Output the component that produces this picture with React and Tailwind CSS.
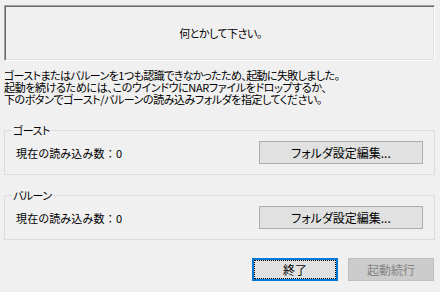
import React from "react";

function Group({ title, className }) {
  return (
    <div className={"relative ml-[4px] w-[431px] h-[45px] border border-[#dcdcdc] flex items-center justify-between pl-[11px] pr-[11px] " + (className || "")}>
      <span className="absolute left-[7px] top-[-8px] bg-[#f0f0f0] px-[1px] leading-[14px] text-[11px] tracking-[-0.5px]">{title}</span>
      <span className="leading-[14px] pt-[1px] text-[11px] tracking-[0.2px]">
        現在の読み込み数<span className="[font-feature-settings:normal]">：</span>0
      </span>
      <div className="w-[164px] h-[23px] border border-[#adadad] bg-[#e1e1e1] flex items-center justify-center leading-[14px]">
        フォルダ設定編集...
      </div>
    </div>
  );
}

export default function App() {
  return (
    <div className="w-[440px] h-[292px] bg-[#f0f0f0] text-black text-[12px] overflow-hidden [font-family:'Noto_Sans_CJK_JP',sans-serif] [font-feature-settings:'palt']">
      <div className="pt-[5px]">
        <div className="ml-[4px] w-[431px] h-[56px] border border-t-[#a0a0a0] border-l-[#a0a0a0] border-r-white border-b-white shadow-[inset_1px_1px_0_#696969,inset_-1px_-1px_0_#e3e3e3] flex items-center justify-center">
          <span className="leading-[14px] text-[11px] tracking-[-0.5px] pl-[2px]">何とかして下さい。</span>
        </div>
      </div>
      <div className="mt-[8px] ml-[4px] leading-[12px] text-[11px]">
        <div className="tracking-[-0.6px] whitespace-nowrap">ゴーストまたはバルーンを1つも認識できなかったため、起動に失敗しました。</div>
        <div className="tracking-[-0.35px] whitespace-nowrap">起動を続けるためには、このウインドウにNARファイルをドロップするか、</div>
        <div className="tracking-[-0.45px] whitespace-nowrap">下のボタンでゴースト/バルーンの読み込みフォルダを指定してください。</div>
      </div>
      <Group title="ゴースト" className="mt-[25px]" />
      <Group title="バルーン" className="mt-[20px]" />
      <div className="mt-[18px] flex justify-end gap-[10px] pr-[6px]">
        <div className="w-[86px] h-[23px] border-2 border-[#0078d7] bg-[#e1e1e1] flex">
          <div className="flex-1 border border-dotted border-black flex items-center justify-center leading-[14px]">終了</div>
        </div>
        <div className="w-[86px] h-[23px] border border-[#bfbfbf] bg-[#cccccc] text-[#838383] flex items-center justify-center leading-[14px]">
          起動続行
        </div>
      </div>
    </div>
  );
}
